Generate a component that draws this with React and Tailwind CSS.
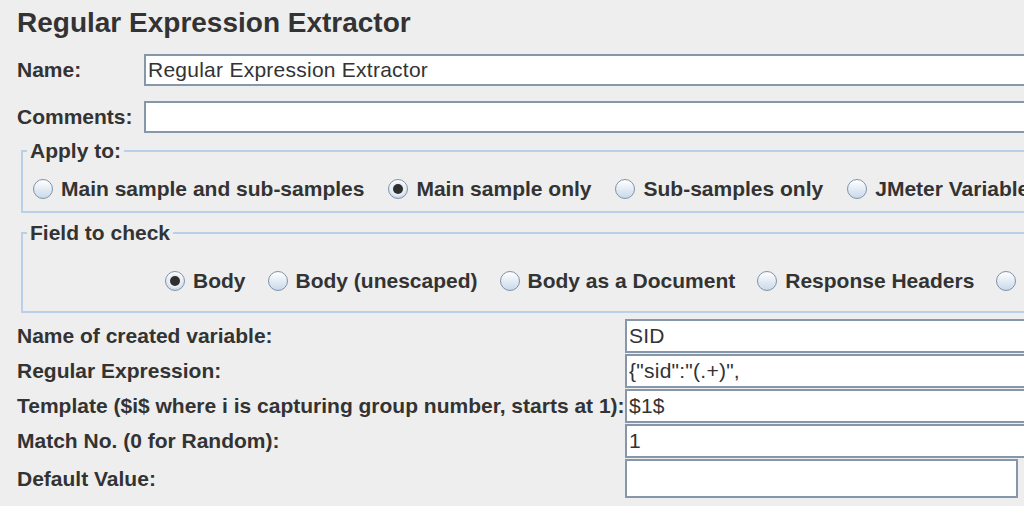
import React from 'react';

const FONT = { fontFamily: '"Liberation Sans", Arial, sans-serif' };

function Radio({ checked, label }) {
  return (
    <div className="flex items-center shrink-0">
      <span className="w-[20px] h-[20px] rounded-full border border-[#7f93a8] bg-gradient-to-b from-[#ffffff] to-[#c9d9ea] flex items-center justify-center">
        {checked && <span className="w-[10px] h-[10px] rounded-full bg-[#2f2f2f] ring-2 ring-[#e9eef4]" />}
      </span>
      <span className="ml-[8px] text-[21px] leading-[24px] font-bold text-[#333333] whitespace-nowrap">{label}</span>
    </div>
  );
}

function Field({ value = '', className = '' }) {
  return (
    <div className={`bg-white border-2 border-r-0 border-[#8797aa] flex items-center pl-[2px] text-[21px] tracking-[0.25px] text-[#333333] whitespace-nowrap ${className}`}>
      {value}
    </div>
  );
}

const ROWS = [
  { label: 'Name of created variable:', value: 'SID' },
  { label: 'Regular Expression:', value: '{"sid":"(.+)",' },
  { label: 'Template ($i$ where i is capturing group number, starts at 1):', value: '$1$' },
  { label: 'Match No. (0 for Random):', value: '1' },
];

export default function App() {
  return (
    <div className="w-[1024px] h-[506px] bg-[#eeeeee] overflow-hidden pl-[17px]" style={FONT}>
      {/* Title */}
      <h1 className="pt-[9px] text-[28px] leading-[28px] font-bold text-[#333333] whitespace-nowrap">
        Regular Expression Extractor
      </h1>

      {/* Name / Comments */}
      <div className="mt-[17px] flex items-center h-[32px]">
        <span className="w-[127px] shrink-0 text-[21px] font-bold text-[#333333]">Name:</span>
        <Field value="Regular Expression Extractor" className="h-[32px] w-[900px] shrink-0" />
      </div>
      <div className="mt-[15px] flex items-center h-[32px]">
        <span className="w-[127px] shrink-0 text-[21px] font-bold text-[#333333]">Comments:</span>
        <Field className="h-[32px] w-[900px] shrink-0" />
      </div>

      {/* Apply to */}
      <fieldset className="mt-[8px] ml-[4px] w-[1100px] border-2 border-[#b9d0e6] pt-[16px] pb-[10px]">
        <legend className="ml-[4px] px-[3px] text-[21px] leading-[20px] font-bold text-[#333333]">Apply to:</legend>
        <div className="pl-[10px] flex items-center gap-[24px]">
          <Radio label="Main sample and sub-samples" />
          <Radio checked label="Main sample only" />
          <Radio label="Sub-samples only" />
          <Radio label="JMeter Variable Name to use" />
        </div>
      </fieldset>

      {/* Field to check */}
      <fieldset className="mt-[10px] ml-[4px] w-[1100px] border-2 border-[#b9d0e6] pt-[26px] pb-[18px]">
        <legend className="ml-[4px] px-[3px] text-[21px] leading-[20px] font-bold text-[#333333]">Field to check</legend>
        <div className="pl-[142px] flex items-center gap-[22px]">
          <Radio checked label="Body" />
          <Radio label="Body (unescaped)" />
          <Radio label="Body as a Document" />
          <Radio label="Response Headers" />
          <Radio label="Request Headers" />
        </div>
      </fieldset>

      {/* Variable settings */}
      <div className="mt-[6px] grid grid-cols-[608px_1fr] gap-y-[1px]">
        {ROWS.map((r) => (
          <React.Fragment key={r.label}>
            <span className="h-[34px] flex items-center text-[21px] font-bold text-[#333333] whitespace-nowrap">{r.label}</span>
            <Field value={r.value} className="h-[34px] w-[420px]" />
          </React.Fragment>
        ))}
        <span className="h-[39px] flex items-center text-[21px] font-bold text-[#333333]">Default Value:</span>
        <div className="h-[39px] w-[393px] bg-white border-2 border-[#8797aa]" />
      </div>
    </div>
  );
}
